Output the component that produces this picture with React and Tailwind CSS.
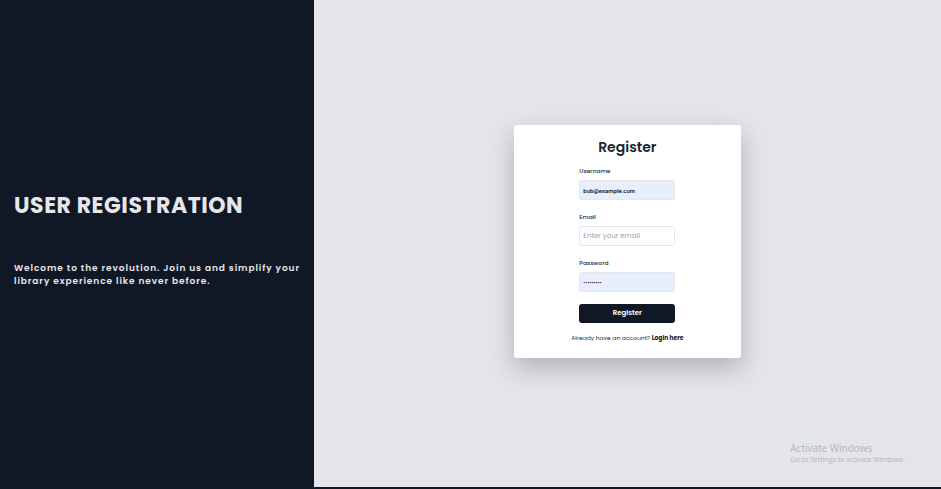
const inputStyle =
  'mt-1 block h-5 w-full rounded-[3px] border border-gray-200 px-[3px] outline-none';

function Field({ id, label, className, ...props }) {
  return (
    <div>
      <label htmlFor={id} className="block text-[6px] leading-[10px] font-medium text-gray-800">
        {label}
      </label>
      <input id={id} name={id} className={`${inputStyle} ${className}`} {...props} />
    </div>
  );
}

export default function App() {
  return (
    <div className="flex min-h-screen border-b-2 border-[#101826] bg-[#e4e5e9] font-['Poppins','Inter',sans-serif]">
      <section className="flex w-1/3 flex-col justify-center gap-10 bg-[#101826] pr-2 pb-2.5 pl-3.5 text-gray-200">
        <h1 className="text-[22px] leading-8 font-bold tracking-wide whitespace-nowrap">
          USER REGISTRATION
        </h1>
        <p className="text-[9px] leading-[13px] font-semibold tracking-widest">
          Welcome to the revolution. Join us and simplify your library experience like never before.
        </p>
      </section>

      <main className="relative flex flex-1 items-center justify-center pb-1">
        <div className="w-[227px] rounded-[3px] bg-white pt-3 pb-[15px] shadow-[0_10px_24px_rgba(16,24,38,0.25)]">
          <h2 className="text-center text-[14px] leading-5 font-semibold text-[#1b2533]">Register</h2>
          <form className="mx-auto mt-[9px] flex w-24 flex-col gap-3" onSubmit={(e) => e.preventDefault()}>
            <Field
              id="username"
              label="Username"
              type="text"
              defaultValue="bob@example.com"
              className="bg-[#e7eefc] font-['Roboto',sans-serif] text-[6px] font-medium text-gray-950"
            />
            <Field
              id="email"
              label="Email"
              type="email"
              placeholder="Enter your email"
              className="bg-white text-[7px] text-gray-900 placeholder:text-gray-400"
            />
            <Field
              id="password"
              label="Password"
              type="password"
              defaultValue="password1"
              className="bg-[#e7eefc] font-['Roboto',sans-serif] text-[6px] text-gray-950"
            />
            <button type="submit" className="h-[19px] w-full rounded-[3px] bg-[#101826] text-[7px] font-semibold text-white">
              Register
            </button>
          </form>
          <p className="mt-2.5 text-center text-[6px] leading-[10px] text-gray-800">
            Already have an account?{' '}
            <a href="#login" className="font-bold text-gray-900">
              Login here
            </a>
          </p>
        </div>

        <aside className="absolute right-9 bottom-[22px] font-['Open_Sans',sans-serif] text-[#b3b5b9]">
          <p className="text-[10px] leading-[14px]">Activate Windows</p>
          <p className="text-[7px] leading-[10px]">Go to Settings to activate Windows.</p>
        </aside>
      </main>
    </div>
  );
}
